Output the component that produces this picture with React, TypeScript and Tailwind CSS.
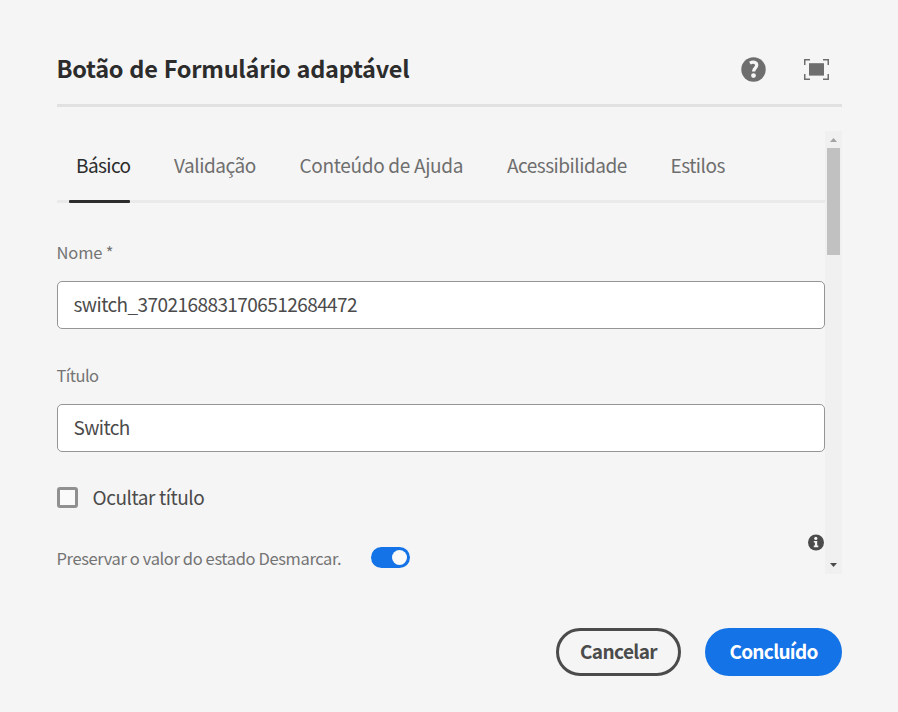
import React from 'react';

type Tab = { label: string; className: string; active?: boolean };

const tabs: Tab[] = [
  { label: 'Básico', className: 'ml-[19px] w-[54px] tracking-[-0.6px]', active: true },
  { label: 'Validação', className: 'ml-[44px] w-[82px] tracking-[-0.45px]' },
  { label: 'Conteúdo de Ajuda', className: 'ml-[43.5px] w-[163.5px] tracking-[-0.32px]' },
  { label: 'Acessibilidade', className: 'ml-[44px] w-[120px] tracking-[-0.5px]' },
  { label: 'Estilos', className: 'ml-[43.5px] w-[55px] tracking-[-0.5px]' },
];

function HelpIcon() {
  return (
    <svg width="25" height="25" viewBox="0 0 25 25" aria-hidden="true">
      <circle cx="12.5" cy="12.5" r="12.2" fill="#6e6e6e" />
      <path d="M8.9 6.1C12.2 4.3 15.7 5.1 15.7 8.2C15.7 11 12.6 11.3 12.6 14.4" fill="none" stroke="#f5f5f5" strokeWidth="3.3" />
      <circle cx="12.5" cy="18.6" r="2.4" fill="#f5f5f5" />
    </svg>
  );
}

function FullscreenIcon() {
  return (
    <svg width="25" height="21" viewBox="0 0 25 21" aria-hidden="true">
      <path d="M6 .75H.75V6M19 .75h5.25V6M24.25 15v5.25H19M6 20.25H.75V15" fill="none" stroke="#6e6e6e" strokeWidth="1.5" />
      <rect x="5" y="4.2" width="15" height="12.4" fill="#6e6e6e" />
    </svg>
  );
}

function InfoIcon() {
  return (
    <svg width="16" height="17" viewBox="0 0 16 17" aria-hidden="true">
      <circle cx="8" cy="8.5" r="8" fill="#4b4b4b" />
      <circle cx="7.8" cy="4.4" r="1.6" fill="#f5f5f5" />
      <path d="M5.8 6.9h3.4v4.6h1.1v1.8H5.8v-1.8h1.1V8.6H5.8z" fill="#f5f5f5" />
    </svg>
  );
}

export default function App() {
  return (
    <main className="flex h-[712px] w-[898px] flex-col overflow-hidden bg-[#f5f5f5] pr-14 pl-[57px] font-['Noto_Sans_CJK_SC',sans-serif] whitespace-nowrap text-[#6e6e6e]">
      <header className="flex h-[107px] shrink-0 border-b-[3px] border-[#e1e1e1]">
        <h1 className="-ml-[0.5px] mt-[48px] h-10 text-[23.5px] leading-10 font-bold tracking-[-0.25px] [word-spacing:1px] text-[#2c2c2c]">Botão de Formulário adaptável</h1>
        <div className="mt-[57px] mr-[13px] ml-auto flex items-start gap-[38px]">
          <HelpIcon />
          <div className="pt-[2px]"><FullscreenIcon /></div>
        </div>
      </header>

      <div className="mt-6 flex h-[443px] shrink-0">
        <div className="w-[768px]">
          <nav className="flex h-[72px] border-b-[3px] border-[#eaeaea] text-[19px] leading-[30px]">
            {tabs.map((tab) => (
              <div key={tab.label} className={`relative h-[72px] shrink-0 pt-[19px] ${tab.className} ${tab.active ? 'text-[#2c2c2c]' : ''}`}>
                {tab.label}
                {tab.active && <span className="absolute bottom-0 -left-[7px] h-[3px] w-[61px] rounded-[1px] bg-[#2c2c2c]" />}
              </div>
            ))}
          </nav>

          <label className="-ml-[0.5px] mt-[35px] block h-[43px] text-[16.5px] leading-[28px] text-[#747474]">
            <span className="tracking-[-0.15px]">Nome *</span>
          </label>
          <div className="h-12 rounded-[5px] border border-[#959595] bg-white pl-[15.5px] text-[19px] leading-[44px] text-[#4b4b4b]">
            <span className="tracking-[-0.57px]">switch_3702168831706512684472</span>
          </div>
          <label className="-ml-[0.5px] mt-[32px] block h-[43px] text-[16.5px] leading-[28px] text-[#747474]">
            <span className="tracking-[-0.55px]">Título</span>
          </label>
          <div className="h-12 rounded-[5px] border border-[#959595] bg-white pl-[15.5px] text-[19px] leading-[44px] text-[#4b4b4b]">
            <span className="tracking-[-0.6px]">Switch</span>
          </div>
          <div className="mt-[31px] flex h-[30px] items-center gap-[14.5px] text-[19px] leading-[30px] text-[#4b4b4b]">
            <span className="-mt-px size-[21px] rounded-[3px] border-[3px] border-[#909090] bg-[#fafafa]" />
            <span className="-mt-[2px] tracking-[-0.42px]">Ocultar título</span>
          </div>
          <div className="mt-[21px] flex">
            <span className="-ml-[0.5px] mt-[10px] w-[314.5px] text-[16.5px] leading-[28px] tracking-[-0.38px] text-[#747474]">Preservar o valor do estado Desmarcar.</span>
            <span className="mt-[13px] flex h-[21px] w-[39px] items-center justify-end rounded-full bg-[#1473e6] pr-[3px]">
              <span className="size-[15px] rounded-full bg-[#fafafa]" />
            </span>
            <span className="mr-px ml-auto"><InfoIcon /></span>
          </div>
        </div>

        <div className="flex w-[17px] flex-col items-center bg-[#f0f0f0]">
          <svg className="mt-[7px] shrink-0" width="7" height="4" viewBox="0 0 7 4"><path d="M0 4L3.5 0L7 4z" fill="#a3a3a3" /></svg>
          <div className="mt-[6px] h-[107px] w-[13px] shrink-0 bg-[#c1c1c1]" />
          <svg className="mt-auto mb-[7px] shrink-0" width="7" height="4" viewBox="0 0 7 4"><path d="M0 0h7L3.5 4z" fill="#4b4b4b" /></svg>
        </div>
      </div>

      <footer className="mt-[54px] flex justify-end gap-6 text-[19px] leading-[30px] font-bold">
        <button className="flex h-12 w-[125px] items-center justify-center rounded-full border-[3px] border-[#4b4b4b] pb-[2px] tracking-[-0.6px] text-[#4b4b4b]">Cancelar</button>
        <button className="flex h-12 w-[137px] items-center justify-center rounded-full bg-[#1473e6] pb-[2px] tracking-[-0.7px] text-white">Concluído</button>
      </footer>
    </main>
  );
}
